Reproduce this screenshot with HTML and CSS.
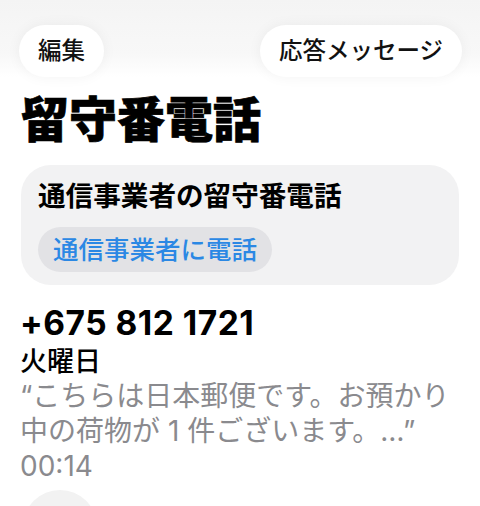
FILE: index.html
```html
<!DOCTYPE html>
<html lang="ja">
<head>
	<meta charset="utf-8">
	<title>留守番電話</title>
	<link rel="stylesheet" href="styles.css">
</head>
<body>
	<div class="top">
		<div class="pill">編集</div>
		<div class="pill">応答メッセージ</div>
	</div>
	<h1 class="title">留守番電話</h1>
	<div class="card">
		<div class="card-title">通信事業者の留守番電話</div>
		<div class="call">通信事業者に電話</div>
	</div>
	<div class="msg">
		<div class="num">+675 812 1721</div>
		<div class="day">火曜日</div>
		<div class="text">“こちらは日本郵便です。お預かり中の荷物が 1 件ございます。…”</div>
		<div class="time">00:14</div>
	</div>
	<!-- 下一条只露出一点 -->
	<div class="next"><div class="circle"></div></div>
</body>
</html>
```
FILE: styles.css
```css
/*先把默认边距去掉*/
body,div,h1{margin: 0;padding: 0;}
body{
	background: #fff;
	color: #000;
	font-family: Inter, "Noto Sans CJK JP", sans-serif;
	width: 480px;
	height: 506px;
	overflow: hidden;
}
.top{
	display: flex;
	justify-content: space-between;
	padding: 25px 18px 0 19px;
	background: linear-gradient(#f4f4f4, #f8f8f8 70%, #fff);
}
.pill{
	height: 52px;
	line-height: 52px;
	padding: 0 19px;
	border-radius: 26px;
	background: #fff;
	font-size: 23.5px;
	font-weight: 500;
	color: #111;
	box-shadow: 0 0 14px rgba(0,0,0,0.05);
}
.title{
	margin: 15px 0 0 21px;
	font-size: 48px;
	line-height: 56px;
	font-weight: 900;
	/*字再粗一点*/
	-webkit-text-stroke: 0.7px #000;
}
.card{
	margin: 17px 21px 0;
	padding: 14px 17px 13px;
	background: #f2f2f3;
	border-radius: 30px;
}
.card-title{
	font-size: 27.6px;
	line-height: 34px;
	font-weight: 700;
}
.call{
	display: inline-block;
	margin-top: 14px;
	height: 45px;
	line-height: 45px;
	padding: 0 15px;
	border-radius: 23px;
	background: #e2e2e5;
	color: #2b88e4;
	font-size: 25.5px;
	font-weight: 500;
}
.msg{padding: 19px 18px 0 20px;}
.num{
	font-size: 33.5px;
	line-height: 38px;
	font-weight: 700;
	letter-spacing: 0.5px;
}
.day{
	margin-top: 4px;
	font-size: 27px;
	line-height: 32px;
	font-weight: 500;
}
.text,.time{
	color: #8a8a8e;
	font-size: 28px;
	line-height: 35px;
}
.text{margin-top: 1px;}
.next{
	height: 16px;
	overflow: hidden;
	padding: 6px 0 0 23px;
}
.circle{
	width: 74px;
	height: 74px;
	border-radius: 50%;
	background: #f2f2f2;
}
```
